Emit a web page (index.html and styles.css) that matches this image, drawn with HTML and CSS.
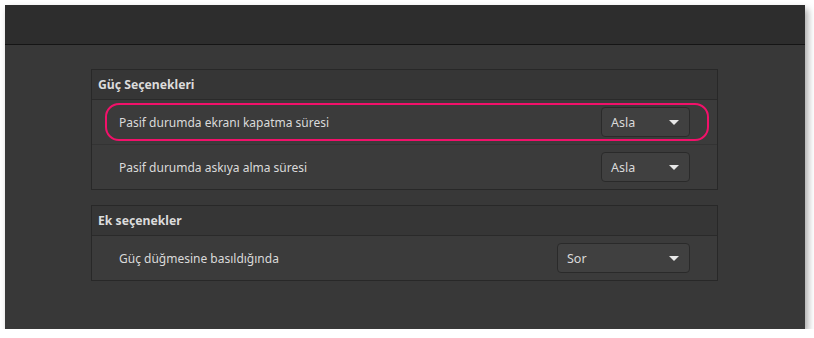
FILE: index.html
```html
<!DOCTYPE html>
<html lang="tr">
<head>
<meta charset="utf-8">
<link rel="stylesheet" href="styles.css">
</head>
<body>
<div class="window">
  <div class="titlebar"></div>
  <div class="content">
    <section class="frame">
      <div class="frame-head">Güç Seçenekleri</div>
      <div class="row">
        <span class="label">Pasif durumda ekranı kapatma süresi</span>
        <div class="combo"><span>Asla</span><span class="arrow"></span></div>
        <div class="highlight"></div>
      </div>
      <div class="row">
        <span class="label">Pasif durumda askıya alma süresi</span>
        <div class="combo"><span>Asla</span><span class="arrow"></span></div>
      </div>
    </section>
    <section class="frame">
      <div class="frame-head">Ek seçenekler</div>
      <div class="row">
        <span class="label">Güç düğmesine basıldığında</span>
        <div class="combo wide"><span>Sor</span><span class="arrow"></span></div>
      </div>
    </section>
  </div>
</div>
</body>
</html>
```
FILE: styles.css
```css
html, body {
  margin: 0;
  padding: 0;
  background: #ffffff;
}
body {
  font-family: "Noto Sans", "Open Sans", sans-serif;
  font-size: 12px;
  color: #dadada;
}
.window {
  margin: 5px 0 0 5px;
  width: 800px;
  height: 324px;
  background: #383838;
  box-shadow: 3px 4px 7px rgba(0, 0, 0, 0.35);
  display: flex;
  flex-direction: column;
}
.titlebar {
  height: 39px;
  background: #2d2d2d;
  border-bottom: 1px solid #151515;
}
.content {
  padding: 24px 0 0 86px;
  display: flex;
  flex-direction: column;
  gap: 15px;
}
.frame {
  width: 625px;
  border: 1px solid #282828;
  background: #3b3b3b;
}
.frame-head {
  height: 29px;
  line-height: 29px;
  padding-left: 6px;
  font-weight: bold;
  font-size: 12.2px;
  background: #363636;
  border-bottom: 1px solid #2a2a2a;
  color: #dcdcdc;
}
.row {
  position: relative;
  height: 44px;
  display: flex;
  align-items: center;
  justify-content: space-between;
  padding: 0 27px 0 27px;
}
.row + .row {
  border-top: 1px solid #333333;
}
.label {
  font-size: 12px;
}
.combo {
  width: 89px;
  height: 30px;
  box-sizing: border-box;
  border: 1px solid #2a2a2a;
  border-radius: 4px;
  background: #404040;
  display: flex;
  align-items: center;
  justify-content: space-between;
  padding: 0 10px 0 9px;
  font-size: 12.5px;
}
.combo.wide {
  width: 133px;
}
.arrow {
  width: 0;
  height: 0;
  border-left: 5px solid transparent;
  border-right: 5px solid transparent;
  border-top: 5px solid #e8e8e8;
}
.highlight {
  position: absolute;
  left: 13px;
  top: 3px;
  width: 600px;
  height: 34px;
  border: 2px solid #f2116a;
  border-radius: 14px;
}
```
